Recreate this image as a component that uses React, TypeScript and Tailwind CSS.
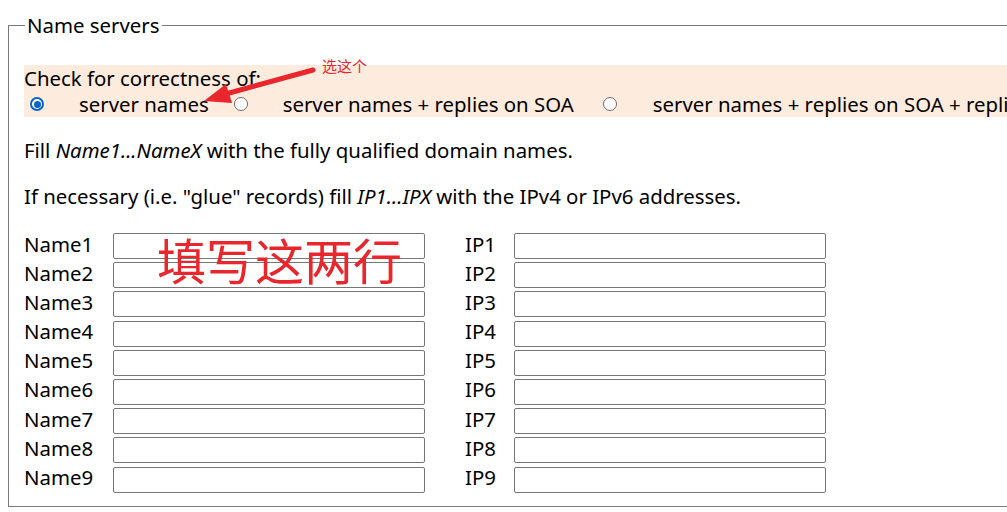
import React from "react";

const rows = [1, 2, 3, 4, 5, 6, 7, 8, 9];

function Radio({ checked }: { checked?: boolean }) {
  return checked ? (
    <span className="flex h-[14px] w-[14px] shrink-0 items-center justify-center rounded-full border-[2px] border-[#0b62c8] bg-white">
      <span className="block h-[7px] w-[7px] rounded-full bg-[#0b62c8]" />
    </span>
  ) : (
    <span className="block h-[14px] w-[14px] shrink-0 rounded-full border border-[#6b6b6b] bg-white" />
  );
}

export default function App() {
  return (
    <div
      className="relative h-[512px] w-[1007px] overflow-hidden bg-white pt-[12px] text-[20.4px] text-black"
      style={{ fontFamily: '"Noto Sans", "Noto Sans CJK SC", sans-serif' }}
    >
      <fieldset className="ml-[8px] w-[1100px] border border-[#7a7a7a] pb-[13px] pl-[15px]">
        <legend className="ml-[1px] px-[2px] leading-[26px]">Name servers</legend>

        {/* check level */}
        <div className="mt-[27px] bg-[#fdebdd] leading-[26px]">
          <div>Check for correctness of:</div>
          <div className="flex items-center whitespace-nowrap">
            <span className="ml-[6px] shrink-0"><Radio checked /></span>
            <span className="ml-[35px] shrink-0">server names</span>
            <span className="ml-[25px] shrink-0"><Radio /></span>
            <span className="ml-[35px] shrink-0">server names + replies on SOA</span>
            <span className="ml-[29px] shrink-0"><Radio /></span>
            <span className="ml-[36px] shrink-0">server names + replies on SOA + replies on NS</span>
          </div>
        </div>

        <p className="mt-[20px] leading-[26px]">
          Fill <i>Name1...NameX</i> with the fully qualified domain names.
        </p>
        <p className="mt-[20px] leading-[26px]">
          If necessary (i.e. "glue" records) fill <i>IP1...IPX</i> with the IPv4 or IPv6 addresses.
        </p>

        <div className="mt-[24px] flex flex-col gap-[3.2px]">
          {rows.map((n) => (
            <div key={n} className="flex h-[26px] items-center">
              <span className="w-[89px] pb-[5px] leading-[26px]">Name{n}</span>
              <input className="h-[26px] w-[312px] rounded-[2px] border border-[#767676] bg-white" />
              <span className="ml-[40px] w-[49px] pb-[5px] leading-[26px]">IP{n}</span>
              <input className="h-[26px] w-[312px] rounded-[2px] border border-[#767676] bg-white" />
            </div>
          ))}
        </div>
      </fieldset>

      {/* annotations */}
      <div className="absolute left-[157px] top-[231px] text-[49px] leading-[60px] text-[#e8262b]">
        填写这两行
      </div>
      <div className="absolute left-[322px] top-[56px] text-[15px] leading-[20px] text-[#e8262b]">
        选这个
      </div>
      <svg className="absolute left-0 top-0" width="1007" height="512">
        <line x1="313" y1="70" x2="222" y2="95" stroke="#e8262b" strokeWidth="5" strokeLinecap="round" />
        <polygon points="204,101 226,84 232,103" fill="#e8262b" />
      </svg>
    </div>
  );
}
